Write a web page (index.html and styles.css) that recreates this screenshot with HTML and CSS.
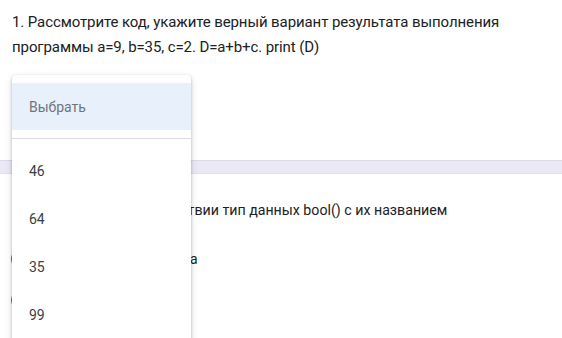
FILE: index.html
```html
<!DOCTYPE html>
<html>

<head>
  <meta charset="UTF-8">
  <link rel="stylesheet" href="styles.css">
</head>

<body>
  <div class="question first">
    <div class="question-title">1. Рассмотрите код, укажите верный вариант результата выполнения программы a=9, b=35, c=2. D=a+b+c. print (D)</div>
    <div class="select-box">Выбрать</div>
  </div>
  <div class="band"></div>
  <div class="question second">
    <div class="question-title">2. Установите в соответствии тип данных bool() с их названием</div>
    <div class="radio-row">
      <span class="radio"></span>
      <span class="radio-label">Логический тип истина</span>
    </div>
    <div class="radio-row">
      <span class="radio"></span>
      <span class="radio-label">Строковый тип</span>
    </div>
  </div>

  <div class="menu">
    <div class="menu-item placeholder">Выбрать</div>
    <div class="menu-divider"></div>
    <div class="menu-item">46</div>
    <div class="menu-item">64</div>
    <div class="menu-item">35</div>
    <div class="menu-item">99</div>
  </div>
</body>

</html>
```

FILE: styles.css
```css
html {
    box-sizing: border-box;
    font-family: Roboto, 'Liberation Sans', Arial, sans-serif;
}

*, ::before, ::after {
    box-sizing: inherit;
}

body {
    margin: 0;
    width: 562px;
    height: 338px;
    overflow: hidden;
    position: relative;
    background-color: #fff;
    color: #202124;
}

/* QUESTIONS */

.question {
    padding: 0 12px;
}

.question.first {
    padding-top: 10px;
}

.question-title {
    font-size: 15px;
    line-height: 25px;
    letter-spacing: -0.1px;
}

.select-box {
    width: 179px;
    height: 48px;
    margin-top: 22px;
    border: 1px solid #dadce0;
    border-radius: 4px;
    padding: 14px 16px;
    font-size: 14px;
    color: #5f6368;
}

.band {
    height: 14px;
    margin-top: 30px;
    background-color: #ece9f6;
    border-top: 1px solid #dcd8e8;
    border-bottom: 1px solid #e2dfec;
}

.question.second {
    padding-top: 24px;
    padding-left: 11px;
}

.question.second .question-title {
    font-size: 14.2px;
    letter-spacing: 0;
    text-indent: 10px;
}

.radio-row {
    display: flex;
    align-items: center;
    gap: 13px;
    height: 20px;
    margin-top: 26px;
}

.radio-row + .radio-row {
    margin-top: 21px;
}

.radio {
    width: 20px;
    height: 20px;
    border: 2px solid #5f6368;
    border-radius: 50%;
}

.radio-label {
    font-size: 14px;
}

/* DROPDOWN MENU */

.menu {
    position: absolute;
    left: 12px;
    top: 75px;
    width: 179px;
    height: 280px;
    padding-top: 8px;
    background-color: #fff;
    border-radius: 4px;
    box-shadow: 0 1px 3px rgb(0 0 0 / 25%), 0 3px 8px rgb(0 0 0 / 12%);
}

.menu-item {
    height: 48px;
    padding-left: 17px;
    display: flex;
    align-items: center;
    font-size: 14px;
    color: #3c4043;
}

.menu-item.placeholder {
    height: 47px;
    background-color: #e8f0fb;
    color: #70757a;
}

.menu-divider {
    height: 1px;
    margin: 8px 0 8px;
    background-color: #dadce0;
}
```
